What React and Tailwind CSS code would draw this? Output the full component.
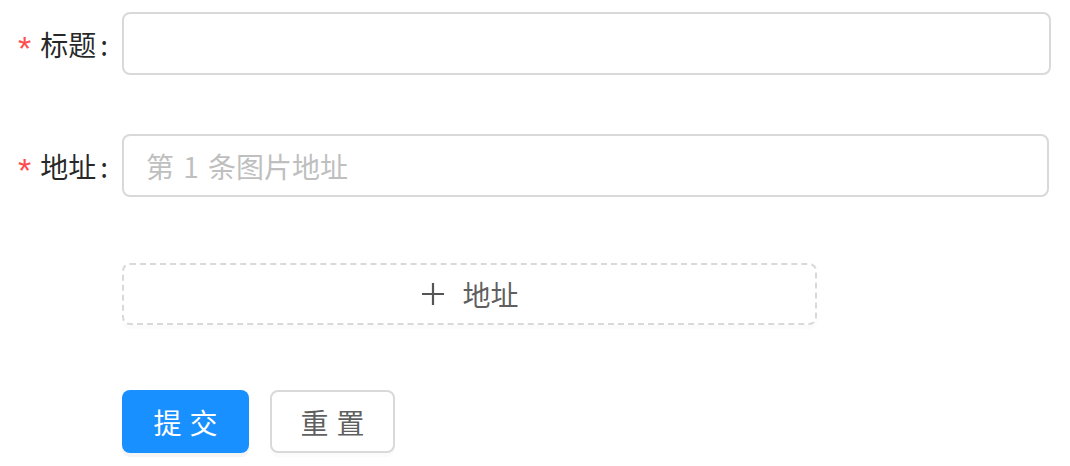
export default function App() {
  var label = "w-[122px] shrink-0 flex items-center justify-end pr-[12px] text-[28px] text-[rgba(0,0,0,0.85)]"
  var star = "text-[#ff4d4f] text-[34px] mr-[9px] leading-none mt-[8px] [font-family:'Liberation_Sans',sans-serif]"

  return (
    <div className="w-[1070px] h-[466px] bg-white pt-[12px] [font-family:'Noto_Sans_CJK_SC',sans-serif]">
      {/* 标题 */}
      <div className="flex items-center h-[63px]">
        <div className={label}>
          <span className={star}>*</span>
          <span>标题</span>
          <span className="ml-[4px] mr-[2px]">:</span>
        </div>
        <input className="w-[929px] h-[63px] rounded-[8px] border-2 border-[#d9d9d9] px-[22px] text-[28px] outline-none" />
      </div>

      {/* 地址 */}
      <div className="flex items-center h-[63px] mt-[59px]">
        <div className={label}>
          <span className={star}>*</span>
          <span>地址</span>
          <span className="ml-[4px] mr-[2px]">:</span>
        </div>
        <input
          placeholder="第 1 条图片地址"
          className="w-[927px] h-[63px] rounded-[8px] border-2 border-[#d9d9d9] px-[22px] text-[28px] outline-none placeholder:text-[#bfbfbf] [word-spacing:3px]"
        />
      </div>

      {/* 添加地址 */}
      <div className="pl-[122px] mt-[66px]">
        <button className="w-[695px] h-[62px] rounded-[8px] border-2 border-dashed border-[#d9d9d9] bg-white flex items-center justify-center gap-[16px] text-[28px] text-[rgba(0,0,0,0.65)] shadow-[0_4px_0_rgba(0,0,0,0.015)]">
          <svg width="26" height="26" viewBox="0 0 26 26" fill="none" stroke="#555" strokeWidth="2.2">
            <path d="M13 2v22M2 13h22" />
          </svg>
          <span>地址</span>
        </button>
      </div>

      {/* 按钮 */}
      <div className="pl-[122px] mt-[65px] flex gap-[21px]">
        <button className="w-[127px] h-[63px] rounded-[8px] bg-[#1890ff] text-white text-[28px] tracking-[8px] pl-[8px] shadow-[0_4px_0_rgba(0,0,0,0.045)]">
          提交
        </button>
        <button className="w-[125px] h-[63px] rounded-[8px] border-2 border-[#d9d9d9] bg-white text-[rgba(0,0,0,0.65)] text-[28px] tracking-[8px] pl-[8px] shadow-[0_4px_0_rgba(0,0,0,0.015)]">
          重置
        </button>
      </div>
    </div>
  )
}
